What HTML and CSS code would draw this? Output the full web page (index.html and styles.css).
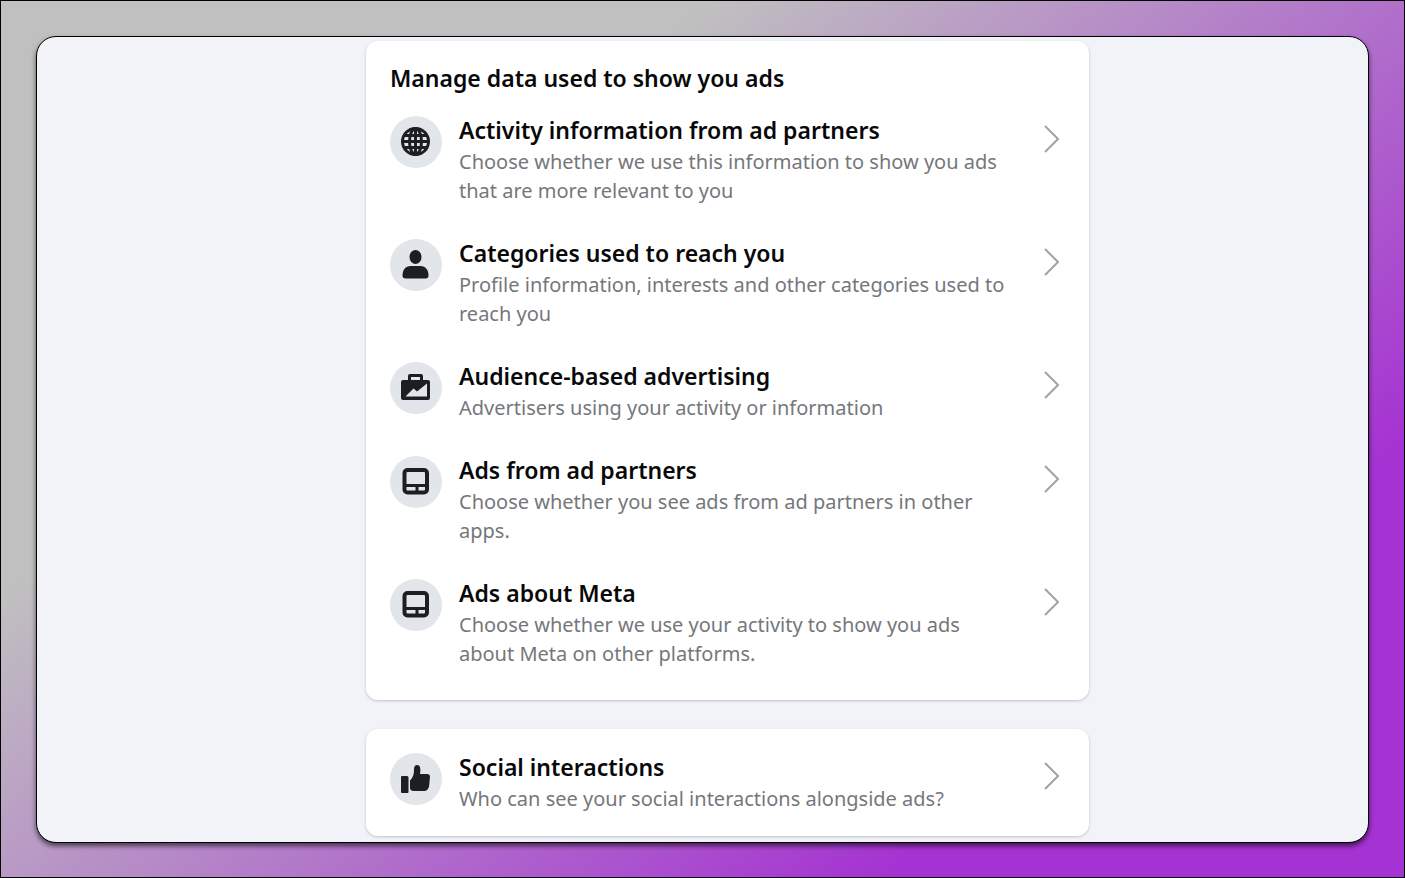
FILE: index.html
```
<!DOCTYPE html>
<html lang="en">
<head>
<meta charset="utf-8">
<title>Ad settings</title>
<link rel="stylesheet" href="styles.css">
</head>
<body>
<main class="panel">
  <div class="column">
    <section class="card">
      <h1 class="card-title">Manage data used to show you ads</h1>
      <ul class="rows">
        <li><a class="row" href="#partners">
          <span class="badge"><svg viewBox="0 0 30 30"><circle cx="14.500" cy="14.500" r="13"/><ellipse cx="14.500" cy="14.500" rx="6" ry="13"/><path d="M14.500 2v26M2 14.500h26M4 8.500h21M4 20.500h21"/></svg></span>
          <span class="text"><strong class="name">Activity information from ad partners</strong><span class="desc">Choose whether we use this information to show you ads that are more relevant to you</span></span>
          <svg class="chevron" viewBox="0 0 16 28"><path d="M2 1l13 13L2 27"/></svg>
        </a></li>
        <li><a class="row" href="#categories">
          <span class="badge"><svg class="solid" viewBox="0 0 30 30"><ellipse cx="14.500" cy="7" rx="6" ry="7"/><path d="M1.500 25.500C1.500 20 4.500 16 9.500 16h10c5 0 8 4 8 9.500 0 2-1 3-3 3h-20c-2 0-3-1-3-3z"/></svg></span>
          <span class="text"><strong class="name">Categories used to reach you</strong><span class="desc">Profile information, interests and other categories used to reach you</span></span>
          <svg class="chevron" viewBox="0 0 16 28"><path d="M2 1l13 13L2 27"/></svg>
        </a></li>
        <li><a class="row" href="#audience">
          <span class="badge"><svg class="solid" viewBox="0 0 30 30"><path fill-rule="evenodd" d="M7 7V3q0-2 2-2h11q2 0 2 2v4h5q2 0 2 2v16q0 2-2 2H2q-2 0-2-2V9q0-2 2-2zM10 7h9V4h-9zM4.500 23.500l8-8 3.500 3 10-8v13z"/></svg></span>
          <span class="text"><strong class="name">Audience-based advertising</strong><span class="desc">Advertisers using your activity or information</span></span>
          <svg class="chevron" viewBox="0 0 16 28"><path d="M2 1l13 13L2 27"/></svg>
        </a></li>
        <li><a class="row" href="#ads-from-partners">
          <span class="badge"><svg class="device" viewBox="0 0 30 30"><rect x="3.500" y="3" width="22.500" height="22.500" rx="3"/><path d="M4 18.500h22M16 19v6"/></svg></span>
          <span class="text"><strong class="name">Ads from ad partners</strong><span class="desc">Choose whether you see ads from ad partners in other apps.</span></span>
          <svg class="chevron" viewBox="0 0 16 28"><path d="M2 1l13 13L2 27"/></svg>
        </a></li>
        <li><a class="row" href="#ads-about-meta">
          <span class="badge"><svg class="device" viewBox="0 0 30 30"><rect x="3.500" y="3" width="22.500" height="22.500" rx="3"/><path d="M4 18.500h22M16 19v6"/></svg></span>
          <span class="text"><strong class="name">Ads about Meta</strong><span class="desc">Choose whether we use your activity to show you ads about Meta on other platforms.</span></span>
          <svg class="chevron" viewBox="0 0 16 28"><path d="M2 1l13 13L2 27"/></svg>
        </a></li>
      </ul>
    </section>
    <section class="card card-small">
      <a class="row" href="#social">
        <span class="badge"><svg class="solid" viewBox="0 0 30 30"><path d="M1 12h5q1.500 0 1.500 1.500V28q0 1-1 1H1q-1 0-1-1V13q0-1 1-1zM9 16.500c3-3 4-6 4-11C13 2.500 14 1 16 1c3 0 4 3 3 9h7q3 0 3 3l-1 10q-1 3-4 4H13q-4 0-4-3v-7.500z"/></svg></span>
        <span class="text"><strong class="name">Social interactions</strong><span class="desc">Who can see your social interactions alongside ads?</span></span>
        <svg class="chevron" viewBox="0 0 16 28"><path d="M2 1l13 13L2 27"/></svg>
      </a>
    </section>
  </div>
</main>
</body>
</html>
```
FILE: styles.css
```
* { box-sizing: border-box; }

body {
  margin: 0;
  min-height: 100vh;
  display: flex;
  padding: 35px 35px 34px;
  border: 1px solid #000;
  background: linear-gradient(140deg, #c0c0c0 29%, #a532d2 79%);
  font-family: "Noto Sans", sans-serif;
  color: #080809;
}

.panel {
  flex: 1;
  padding: 4px 0 5px 50px;
  border: 1px solid #000;
  border-radius: 20px;
  background: #f2f3f8;
  box-shadow: 0 3px 5px rgba(0, 0, 0, 0.6);
}

.column {
  display: flex;
  flex-direction: column;
  gap: 29px;
  max-width: 723px;
  margin: 0 auto;
}

.card {
  padding: 21px 30px 32px 24px;
  border-radius: 12px;
  background: #fff;
  box-shadow: 0 1px 3px rgba(0, 0, 0, 0.2);
}

.card-small { padding: 22px 30px 23px 24px; }

.card-title {
  margin: 0 0 20px;
  font-size: 23px;
  line-height: 32px;
  font-weight: 600;
}

.rows {
  display: flex;
  flex-direction: column;
  gap: 32px;
  margin: 0;
  padding: 0;
  list-style: none;
}

.row {
  display: flex;
  align-items: flex-start;
  color: inherit;
  text-decoration: none;
}

.badge {
  display: flex;
  flex: none;
  align-items: center;
  justify-content: center;
  width: 52px;
  height: 52px;
  margin: 2px 17px 0 0;
  border-radius: 50%;
  background: #e2e5ea;
}

.badge svg {
  width: 30px;
  height: 30px;
  fill: none;
  stroke: #1c1e21;
  stroke-width: 3;
}

.badge .solid {
  fill: #1c1e21;
  stroke: none;
}

.badge .device { stroke-width: 4; }
.badge .device path { stroke-width: 3; }

.text {
  display: flex;
  flex: 1;
  flex-direction: column;
}

.name {
  margin-bottom: 1px;
  font-size: 23px;
  line-height: 32px;
  font-weight: 600;
}

.desc {
  font-size: 20px;
  line-height: 29px;
  color: #75777b;
}

.chevron {
  flex: none;
  width: 16px;
  height: 28px;
  margin: 11px 0 0 30px;
  fill: none;
  stroke: #a0a3a8;
  stroke-width: 2;
}
```
